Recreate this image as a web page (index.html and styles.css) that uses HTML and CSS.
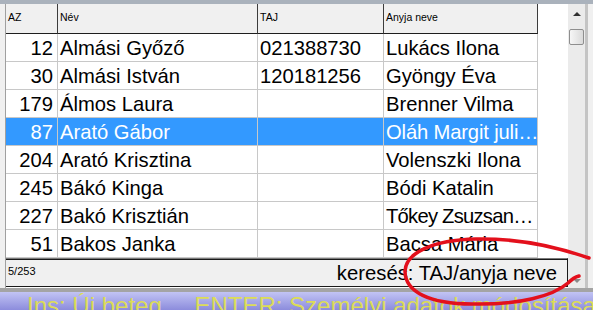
FILE: index.html
```html
<!DOCTYPE html>
<html lang="hu">
<head>
    <meta charset="UTF-8">
    <title>Betegek</title>
    <link rel="stylesheet" href="styles.css">
</head>
<body>
    <div class="ablak">
        <div class="felso-sav"></div>
        <div class="fo">
            <div class="szel-bal"></div>
            <div class="racs-panel">
                <div class="racs">
                    <div class="fej">AZ</div>
                    <div class="fej">Név</div>
                    <div class="fej">TAJ</div>
                    <div class="fej">Anyja neve</div>
                    <div class="fej ures"></div>

                    <div class="cella szam">12</div><div class="cella">Almási Győző</div><div class="cella">021388730</div><div class="cella">Lukács Ilona</div><div class="ures"></div>
                    <div class="cella szam">30</div><div class="cella">Almási István</div><div class="cella">120181256</div><div class="cella">Gyöngy Éva</div><div class="ures"></div>
                    <div class="cella szam">179</div><div class="cella">Álmos Laura</div><div class="cella"></div><div class="cella">Brenner Vilma</div><div class="ures"></div>
                    <div class="cella szam kijelolt">87</div><div class="cella kijelolt">Arató Gábor</div><div class="cella kijelolt"></div><div class="cella kijelolt levagott">Oláh Margit juli…</div><div class="ures"></div>
                    <div class="cella szam">204</div><div class="cella">Arató Krisztina</div><div class="cella"></div><div class="cella">Volenszki Ilona</div><div class="ures"></div>
                    <div class="cella szam">245</div><div class="cella">Bákó Kinga</div><div class="cella"></div><div class="cella">Bódi Katalin</div><div class="ures"></div>
                    <div class="cella szam">227</div><div class="cella">Bakó Krisztián</div><div class="cella"></div><div class="cella levagott szoros">Tőkey Zsuzsan…</div><div class="ures"></div>
                    <div class="cella szam">51</div><div class="cella">Bakos Janka</div><div class="cella"></div><div class="cella">Bacsa Mária</div><div class="ures"></div>
                </div>
                <div class="statusz">
                    <span class="darab">5/253</span>
                    <span class="kereses">keresés: TAJ/anyja neve</span>
                </div>
            </div>
            <div class="gorgeto">
                <div class="nyil-fel"></div>
                <div class="csuszka"></div>
                <div class="nyil-le"></div>
            </div>
            <div class="szel-jobb"></div>
        </div>
        <div class="also-sav"></div>
        <div class="sugo">
            <span>Ins: Új beteg</span>
            <span class="sugo-enter">ENTER: Személyi adatok módosítása</span>
        </div>

        <!-- piros kézi karika a keresőmező körül -->
        <svg class="karika" width="593" height="310" viewBox="0 0 593 310">
            <path d="M589 258 C566 250 526 238 476 239 C432 240 406 253 405 271 C405 292 430 304 472 304 C520 305 553 296 568 283 C572 279 575 277 579 276"
                  fill="none" stroke="#e3101c" stroke-width="3.5" stroke-linecap="round"/>
        </svg>
    </div>
</body>
</html>
```

FILE: styles.css
```css
body {
    margin: 0;
    padding: 0;
    background-color: #f0f0f0;
    font-family: "Liberation Sans", Arial, sans-serif;
}
.ablak {
    position: relative;
    width: 593px;
    height: 310px;
    display: flex;
    flex-direction: column;
    overflow: hidden;
    background-color: #f0f0f0;
}
.felso-sav {
    height: 4px;
    background-color: #aab2bc;
}
.fo {
    display: flex;
    height: 284px;
}
.szel-bal {
    width: 5px;
}
.racs-panel {
    width: 562px;
    border-left: 1px solid #a0a0a0;
    display: flex;
    flex-direction: column;
    background-color: #fff;
}
.racs {
    display: grid;
    grid-template-columns: 52px 200px 126px 154px 30px;
    grid-template-rows: 30px repeat(8, 28px);
}
.fej {
    background-color: #f0f0f0;
    border-right: 1px solid #3c3c3c;
    border-bottom: 1px solid #1e1e1e;
    font-size: 10.5px;
    line-height: 13px;
    padding: 7px 2px 0;
    color: #000;
}
.fej.ures {
    background-color: #fff;
    border: none;
}
.cella {
    border-right: 1px solid #c8c8c8;
    border-bottom: 1px solid #c8c8c8;
    font-size: 20.2px;
    line-height: 25px;
    padding: 2px 2px 0;
    white-space: nowrap;
    overflow: hidden;
    color: #000;
}
.szam {
    text-align: right;
    padding-right: 4px;
}
.levagott {
    letter-spacing: -0.15px;
}
.levagott.szoros {
    letter-spacing: -0.75px;
}
.kijelolt {
    background-color: #3399ff;
    color: #fff;
}
.statusz {
    height: 27px;
    border-top: 1px solid #7a7a7a;
    box-shadow: inset 0 1px 0 #1a1a1a;
    border-right: 1px solid #1a1a1a;
    border-bottom: 1px solid #1a1a1a;
    background-color: #f0f0f0;
    display: flex;
    justify-content: space-between;
    align-items: flex-start;
}
.darab {
    font-size: 11px;
    line-height: 13px;
    padding: 6px 0 0 2px;
}
.kereses {
    font-size: 20.3px;
    line-height: 25px;
    padding: 2px 10px 0 0;
}
.gorgeto {
    width: 17px;
    background-color: #ebebeb;
    display: flex;
    flex-direction: column;
    align-items: center;
}
.nyil-fel {
    margin-top: 8px;
    width: 0;
    height: 0;
    border-left: 4px solid transparent;
    border-right: 4px solid transparent;
    border-bottom: 4px solid #303030;
}
.csuszka {
    margin-top: 13px;
    width: 13px;
    height: 14px;
    border: 1px solid #8e8e8e;
    border-radius: 2px;
    background: linear-gradient(to right, #f6f6f6, #dadada);
}
.nyil-le {
    margin-top: auto;
    margin-bottom: 5px;
    width: 0;
    height: 0;
    border-left: 4px solid transparent;
    border-right: 4px solid transparent;
    border-top: 4px solid #8a8a8a;
}
.szel-jobb {
    width: 5px;
    border-left: 3px solid #c4c4c4;
}
.also-sav {
    height: 4px;
    background-color: #a4a4a4;
}
.sugo {
    height: 16px;
    padding-top: 2px;
    padding-left: 27px;
    background: linear-gradient(#c2c4f4, #8c8cdc);
    color: #dcdc58;
    font-size: 24px;
    line-height: 24px;
    white-space: nowrap;
    overflow: hidden;
}
.sugo-enter {
    margin-left: 26px;
}
.karika {
    position: absolute;
    left: 0;
    top: 0;
    pointer-events: none;
}
```
